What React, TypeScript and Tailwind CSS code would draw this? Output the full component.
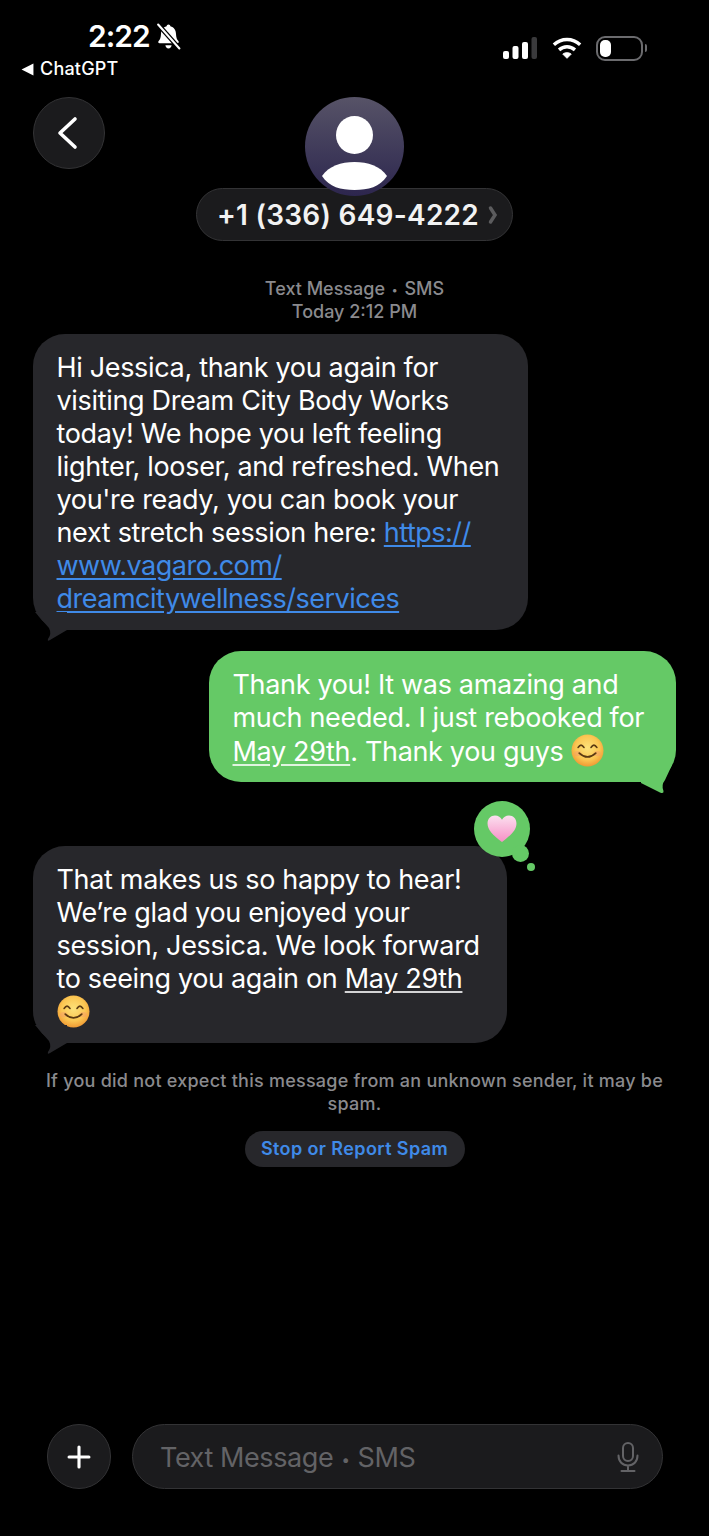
import type { ReactNode } from 'react'
import { Plus } from 'lucide-react'

const FONT = 'font-["Inter","Liberation_Sans",sans-serif]'

function SmileEmoji({ id }: { id: string }): React.JSX.Element {
  return (
    <svg viewBox="0 0 32 32" className="inline-block h-[33px] w-[33px] align-[-6px]">
      <defs>
        <radialGradient id={id} cx="50%" cy="42%" r="58%">
          <stop offset="0%" stopColor="#fde27a" />
          <stop offset="65%" stopColor="#fbc652" />
          <stop offset="100%" stopColor="#f09a34" />
        </radialGradient>
      </defs>
      <circle cx="16" cy="16" r="15.5" fill={`url(#${id})`} />
      <ellipse cx="6.5" cy="19" rx="3.5" ry="2.5" fill="#f59a6b" opacity="0.45" />
      <ellipse cx="25.5" cy="19" rx="3.5" ry="2.5" fill="#f59a6b" opacity="0.45" />
      <path d="M7 13q2.700-4.500 5.500 0M19.500 13q2.700-4.500 5.500 0" fill="none" stroke="#5b3a12" strokeWidth="1.700" strokeLinecap="round" />
      <path d="M8 18.500q8 7.500 16 0" fill="none" stroke="#5b3a12" strokeWidth="1.700" strokeLinecap="round" />
    </svg>
  )
}

function Bubble({ sent, className, children }: { sent?: boolean; className: string; children: ReactNode }): React.JSX.Element {
  return (
    <div className={`relative rounded-[32px] pb-[15px] pl-[23.5px] pr-[18px] pt-[17px] text-[27px] leading-[33px] tracking-[-0.33px] text-white ${sent ? 'bg-[#65c966]' : 'bg-[#27272b]'} ${className}`}>
      {children}
      {sent ? (
        <svg viewBox="0 0 40 30" className="absolute bottom-[-13px] right-0 h-[30px] w-[40px]">
          <path d="M5 18 24 27.500Q28 29 27.500 26 25 20 29 15L36 0H5Z" fill="#65c966" />
        </svg>
      ) : (
        <svg viewBox="0 0 40 30" className="absolute bottom-[-12px] left-0 h-[30px] w-[40px]">
          <path d="M34 18 17 28Q14 30 15 27 19 22 16 16L2 0H34Z" fill="#27272b" />
        </svg>
      )}
    </div>
  )
}

export default function App(): React.JSX.Element {
  return (
    <div className={`flex h-[1536px] w-[709px] flex-col overflow-hidden bg-black ${FONT}`}>
      {/* status bar */}
      <div className="flex h-[97px] shrink-0 justify-between pl-[21px] pr-[62px] text-white">
        <div className="flex flex-col">
          <div className="ml-[67px] mt-[17px] flex h-[38px] items-center gap-[5px]">
            <span className="text-[30px] font-semibold tracking-[-1px]">2:22</span>
            <svg viewBox="0 0 26 26" className="h-[27px] w-[27px]" fill="white">
              <path d="M13 1.500c1 0 1.700.7 1.800 1.600 3.500.8 5.200 3.600 5.400 7.200.2 3.600.8 5.500 2.300 7.100.8.900.3 2.100-.9 2.100H4.400c-1.200 0-1.700-1.200-.9-2.100 1.500-1.600 2.100-3.500 2.300-7.100.2-3.600 1.900-6.400 5.400-7.200.1-.9.8-1.600 1.800-1.600ZM10 21.500h6c-.2 1.700-1.400 3-3 3s-2.800-1.300-3-3Z" />
              <path d="M3 1.500 23.500 24.500" stroke="black" strokeWidth="4.500" />
              <path d="M3 1.500 23.500 24.500" stroke="white" strokeWidth="2" strokeLinecap="round" />
            </svg>
          </div>
          <div className="mt-[2px] flex items-center gap-[6px] text-[18px] font-medium leading-[24px] tracking-[0.2px]">
            <svg viewBox="0 0 12 12" className="h-[13px] w-[13px]" fill="white">
              <path d="M0.500 6 11.500 0.500V11.500Z" />
            </svg>
            ChatGPT
          </div>
        </div>
        <div className="mt-[36px] flex h-[24px] items-center gap-[15px]">
          <svg viewBox="0 0 34 24" className="h-[24px] w-[34px]">
            <rect x="0" y="15" width="6" height="8" rx="2" fill="white" />
            <rect x="9.500" y="10" width="6" height="13" rx="2" fill="white" />
            <rect x="19" y="6" width="6" height="17" rx="2" fill="white" />
            <rect x="28.500" y="1" width="5.500" height="22" rx="2" fill="#3a3a3c" />
          </svg>
          <svg viewBox="0 0 32 24" className="h-[24px] w-[30px]" fill="none" stroke="white" strokeWidth="3.600">
            <path d="M2 8.500c8-7.500 20-7.500 28 0" />
            <path d="M7.500 14c5-4.500 12-4.500 17 0" />
            <path d="M16 23 11.500 18.500c2.500-2 6.500-2 9 0Z" fill="white" strokeWidth="1" />
          </svg>
          <div className="-ml-[1px] flex items-center gap-[2px]">
            <div className="flex h-[25px] w-[47px] items-center rounded-[9px] border-2 border-[#6b6b6e] p-[2px]">
              <div className="h-full w-[11px] rounded-[5px] bg-white" />
            </div>
            <div className="h-[8px] w-[2px] rounded-r-full bg-[#6b6b6e]" />
          </div>
        </div>
      </div>

      {/* contact header */}
      <div className="grid shrink-0 grid-cols-[1fr_auto_1fr] px-[33px]">
        <div className="flex h-[72px] w-[72px] items-center justify-center rounded-full border border-[#333335] bg-[#1b1b1d] text-white">
          <svg viewBox="0 0 24 36" className="mr-[4px] h-[36px] w-[24px]" fill="none" stroke="white" strokeWidth="3.600" strokeLinecap="round" strokeLinejoin="round">
            <path d="M20 4 5 18 20 32" />
          </svg>
        </div>
        <div className="flex flex-col items-center">
          <div className="relative z-10 flex h-[99px] w-[99px] items-end justify-center overflow-hidden rounded-full bg-gradient-to-b from-[#575367] to-[#2d264e]">
            <svg viewBox="0 0 99 99" className="h-[99px] w-[99px]" fill="white">
              <ellipse cx="49.500" cy="38" rx="18.500" ry="19" />
              <path d="M17 79C24 69 36 65 49.500 65S75 69 82 79C75 90 63 93 49.500 93S24 90 17 79Z" />
            </svg>
          </div>
          <div className="-mt-[8px] flex h-[53px] w-[317px] items-center justify-center gap-[9px] rounded-full border border-[#333335] bg-[#1b1b1d] pl-[6px] pt-[1px]">
            <span className="text-[28px] font-semibold tracking-[0.25px] text-[#f2f2f2]">+1 (336) 649-4222</span>
            <svg viewBox="0 0 10 20" className="h-[20px] w-[10px]" fill="none" stroke="#5c5c5e" strokeWidth="3.500" strokeLinecap="round">
              <path d="M2.500 3 7 10 2.500 17" />
            </svg>
          </div>
        </div>
      </div>

      {/* thread */}
      <div className="flex flex-1 flex-col px-[33px]">
        <div className="mt-[36px] text-center text-[18px] font-medium leading-[23px] text-[#8a8a8e]">
          <div className="h-[23px]">
            Text Message <span className="mx-[2px] align-[1px] text-[11px] leading-none">•</span> SMS
          </div>
          <div className="h-[23px]">Today 2:12 PM</div>
        </div>

        <Bubble className="mt-[11px] h-[296px] w-[495px]">
          Hi Jessica, thank you again for visiting Dream City Body Works today! We hope you left feeling lighter, looser, and refreshed. When you're ready, you can book your next stretch session here:{' '}
          <span className="tracking-[-0.5px] text-[#3f8ae8] underline underline-offset-[3px]">
            https://
            <br />
            www.vagaro.com/
            <br />
            dreamcitywellness/services
          </span>
        </Bubble>

        <Bubble sent className="ml-auto mt-[21px] h-[131px] w-[467px]">
          Thank you! It was amazing and much needed. I just rebooked for <span className="underline decoration-white/80 underline-offset-[3px]">May 29th</span>. Thank you guys <SmileEmoji id="smile-a" />
        </Bubble>

        <Bubble className="mt-[64px] h-[197px] w-[474px]">
          That makes us so happy to hear! We’re glad you enjoyed your session, Jessica. We look forward to seeing you again on <span className="underline decoration-white/80 underline-offset-[3px]">May 29th</span>
          <br />
          <SmileEmoji id="smile-b" />
          {/* tapback */}
          <div className="absolute right-[-23px] top-[-45px] h-[56px] w-[56px] rounded-full bg-[#65c966]">
            <svg viewBox="0 0 32 30" className="absolute left-[12px] top-[14px] h-[28px] w-[32px]">
              <defs>
                <linearGradient id="heart" x1="0" y1="0" x2="0" y2="1">
                  <stop offset="0%" stopColor="#fbe0ef" />
                  <stop offset="100%" stopColor="#f78fc6" />
                </linearGradient>
              </defs>
              <path d="M16 29C6 21 .5 16 .5 9 .5 4 4 .5 8.500 .5 12 .5 14.500 2.500 16 5 17.500 2.500 20 .5 23.500 .5 28 .5 31.500 4 31.500 9 31.500 16 26 21 16 29Z" fill="url(#heart)" />
            </svg>
            <div className="absolute left-[38px] top-[44px] h-[17px] w-[17px] rounded-full bg-[#65c966]" />
            <div className="absolute left-[53px] top-[62px] h-[8px] w-[8px] rounded-full bg-[#65c966]" />
          </div>
        </Bubble>

        <p className="mt-[26px] text-center text-[18px] font-medium leading-[23px] tracking-[0.24px] text-[#8a8a8e]">
          If you did not expect this message from an unknown sender, it may be spam.
        </p>
        <div className="mt-[16px] flex justify-center">
          <div className="flex h-[36px] w-[220px] items-center justify-center rounded-full bg-[#27272b] pb-[1px] text-[18px] font-semibold tracking-[0.4px] text-[#3f8ae8]">
            Stop or Report Spam
          </div>
        </div>
      </div>

      {/* input bar */}
      <div className="flex shrink-0 items-center gap-[21px] pb-[47px] pl-[47px] pr-[46px]">
        <div className="flex h-[65px] w-[64px] shrink-0 items-center justify-center rounded-full border border-[#333335] bg-[#1b1b1d] text-white">
          <Plus size={34} strokeWidth={2.200} />
        </div>
        <div className="flex h-[65px] flex-1 items-center justify-between rounded-full border border-[#333335] bg-[#1b1b1d] pl-[27px] pr-[23px]">
          <span className="pt-[3px] text-[27px] tracking-[-0.42px] text-[#636366]">
            Text Message <span className="mx-[1px] align-[2px] text-[15px] leading-none">•</span> SMS
          </span>
          <svg viewBox="0 0 22 30" className="h-[30px] w-[22px]" fill="none" stroke="#636366" strokeWidth="2" strokeLinecap="round">
            <rect x="6" y="1" width="10" height="18" rx="5" />
            <path d="M1.500 13.500c0 6 4 10 9.500 10s9.500-4 9.500-10M11 23.500V29M4.500 29H17.500" />
          </svg>
        </div>
      </div>
    </div>
  )
}
